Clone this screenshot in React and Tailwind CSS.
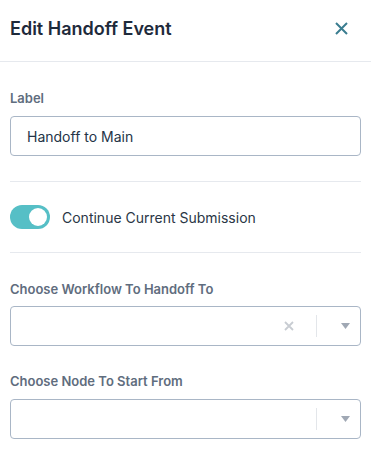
import React from "react";

function Chevron() {
  return (
    <svg width="9" height="6" viewBox="0 0 9 6"><path d="M0 0 L9 0 L4.5 6 Z" fill="#a0a8b4" /></svg>
  );
}

function Select({ clear }) {
  return (
    <div className="h-[40px] border border-[#a9b6c6] rounded-[4px] flex items-center bg-white">
      <div className="flex-1" />
      {clear && (
        <svg width="10" height="10" viewBox="0 0 10 10" className="mr-[22px]">
          <path d="M1 1 L9 9 M9 1 L1 9" stroke="#c8ccd2" strokeWidth="1.8" />
        </svg>
      )}
      <div className="w-px h-[22px] bg-[#e3e6ea]" />
      <div className="w-[43px] flex justify-start pl-[24px]">
        <Chevron />
      </div>
    </div>
  );
}

export default function App() {
  return (
    <div className="w-[371px] h-[466px] bg-white" style={{ fontFamily: "Inter, 'Noto Sans', sans-serif" }}>
      <div className="h-[62px] border-b border-[#e6e9ee] flex items-center justify-between pl-[10px] pr-[23px] pb-[4px]">
        <div className="text-[18px] font-semibold text-[#1e2a3b] leading-6">Edit Handoff Event</div>
        <svg width="13" height="13" viewBox="0 0 13 13">
          <path d="M1 1 L12 12 M12 1 L1 12" stroke="#3a7d90" strokeWidth="2" />
        </svg>
      </div>
      <div className="px-[10px]">
        <div className="pt-[26px] text-[13px] font-semibold text-[#5f6d7e] leading-5">Label</div>
        <div className="mt-[8px] h-[40px] border border-[#a9b6c6] rounded-[4px] flex items-center pl-[16px] text-[14px] text-[#243447]">
          Handoff to Main
        </div>
        <div className="mt-[25px] h-px bg-[#e6e9ee]" />
        <div className="mt-[23px] flex items-center">
          <div className="w-[40px] h-[24px] rounded-full bg-[#56bfc6] flex items-center justify-end pr-[3px]">
            <div className="w-[18px] h-[18px] rounded-full bg-white" />
          </div>
          <div className="ml-[12px] text-[14px] text-[#2a3646]">Continue Current Submission</div>
        </div>
        <div className="mt-[23px] h-px bg-[#e6e9ee]" />
        <div className="pt-[26px] text-[13px] font-semibold text-[#5f6d7e] leading-5">Choose Workflow To Handoff To</div>
        <div className="mt-[7px]"><Select clear /></div>
        <div className="pt-[25px] text-[13px] font-semibold text-[#5f6d7e] leading-5">Choose Node To Start From</div>
        <div className="mt-[8px]"><Select /></div>
      </div>
    </div>
  );
}
